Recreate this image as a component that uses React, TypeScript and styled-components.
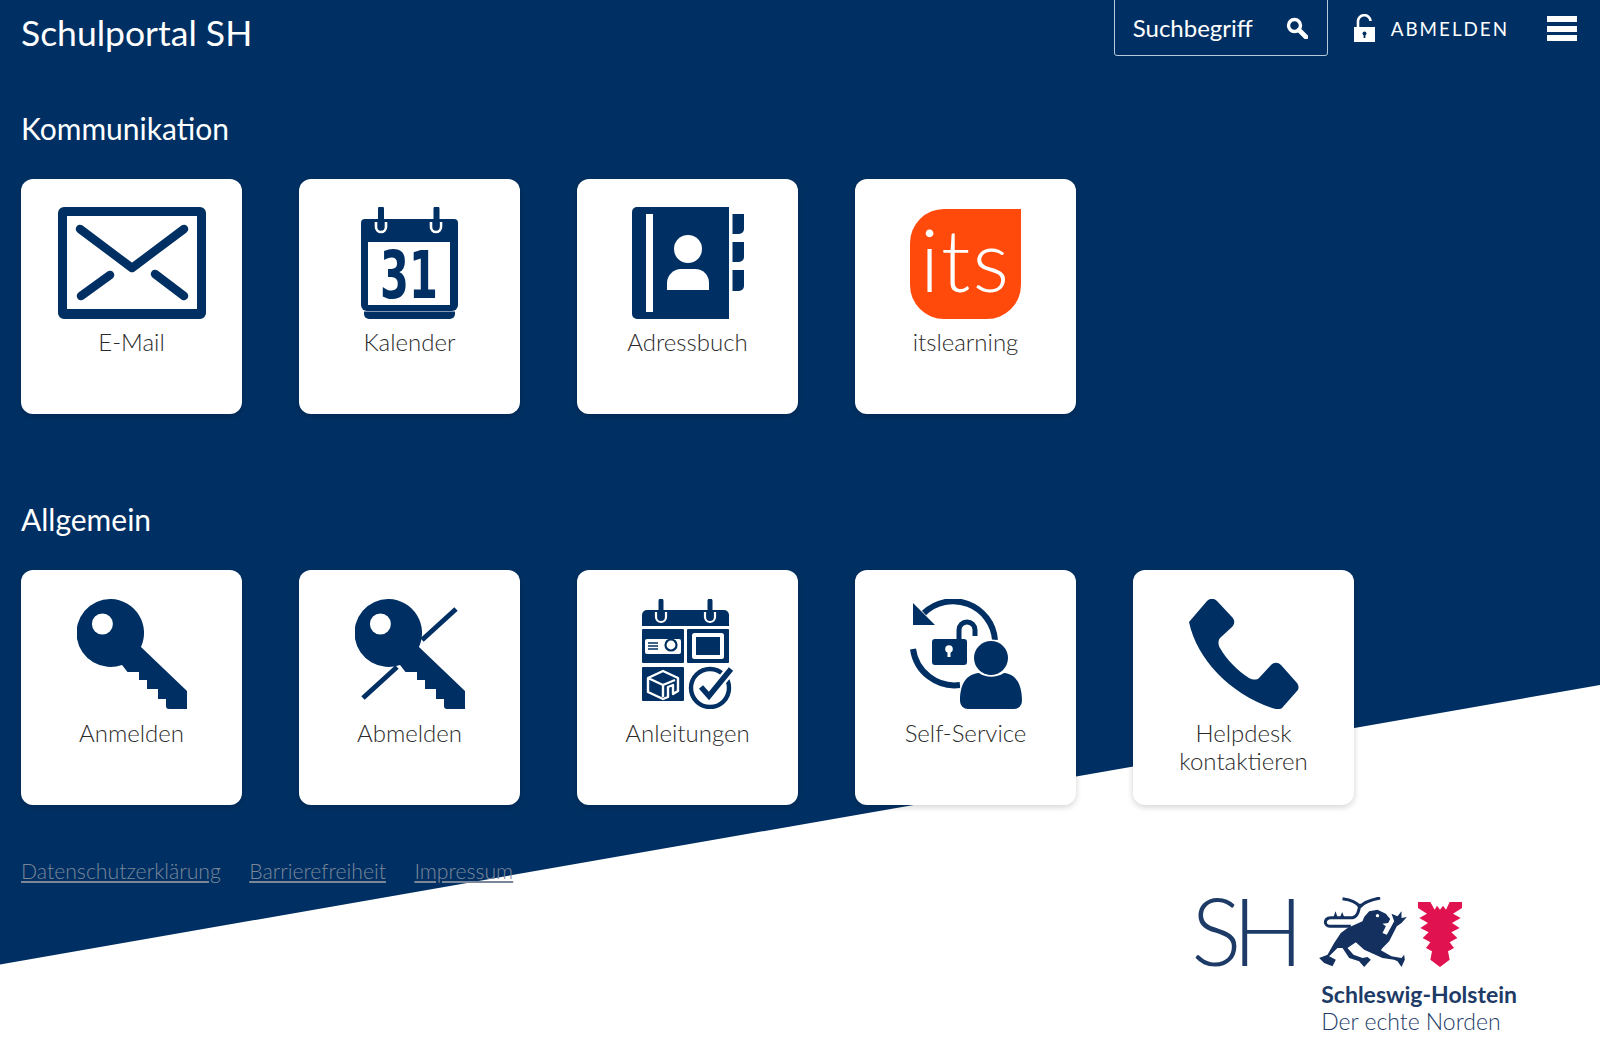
import React from 'react';
import styled, { createGlobalStyle } from 'styled-components';

const NAVY = '#003063';

const GlobalStyle = createGlobalStyle`
  html, body {
    margin: 0;
    padding: 0;
    background: #fff;
    font-family: 'Lato', 'Open Sans', sans-serif;
  }
`;

const Page = styled.div`
  position: relative;
  width: 1600px;
  height: 1045px;
  overflow: hidden;
  background: #fff;
`;

const Backdrop = styled.div`
  position: absolute;
  inset: 0;
  background: ${NAVY};
  clip-path: polygon(0 0, 100% 0, 100% 685px, 0 964.5px);
`;

const Content = styled.div`
  position: relative;
  display: flex;
  flex-direction: column;
  padding: 0 21px;
`;

const Header = styled.header`
  display: flex;
  align-items: flex-start;
  height: 56px;
`;

const Brand = styled.div`
  flex: 1;
  margin-top: 12px;
  color: #fff;
  font-size: 35.5px;
  line-height: 42px;
  font-weight: 400;
`;

const SearchBox = styled.div`
  display: flex;
  align-items: center;
  justify-content: space-between;
  box-sizing: border-box;
  width: 214px;
  height: 57px;
  margin-top: -1px;
  padding: 0 19px 0 18px;
  border: 1px solid #b9c9dc;
  border-radius: 0 0 3px 3px;
  color: #fff;
  font-size: 24px;
`;

const LogoutLink = styled.div`
  display: flex;
  align-items: center;
  gap: 16px;
  margin-left: 26px;
  height: 56px;
  color: #fff;
  font-size: 18.8px;
  letter-spacing: 2px;
`;

const MenuButton = styled.div`
  display: flex;
  flex-direction: column;
  gap: 3.5px;
  width: 30px;
  margin: 16px 2px 0 38px;
`;

const MenuBar = styled.span`
  display: block;
  height: 6px;
  background: #fff;
`;

const Section = styled.section<{ $top: number }>`
  margin-top: ${(p) => p.$top}px;
`;

const SectionTitle = styled.h2`
  margin: 0 0 31px;
  color: #fff;
  font-size: 30px;
  line-height: 40px;
  font-weight: 400;
`;

const Tiles = styled.div`
  display: flex;
  gap: 57px;
`;

const Tile = styled.a`
  display: flex;
  flex-direction: column;
  align-items: center;
  box-sizing: border-box;
  width: 221px;
  height: 235px;
  padding-top: 28px;
  border-radius: 12px;
  background: #fff;
  box-shadow: 0 2px 6px rgba(0, 0, 0, 0.18);
`;

const IconSlot = styled.div`
  display: flex;
  align-items: center;
  justify-content: center;
  height: 112px;
`;

const TileLabel = styled.span`
  margin-top: 9px;
  color: #2b2b2b;
  font-size: 24px;
  line-height: 27.5px;
  font-weight: 300;
  text-align: center;
`;

const Icon = styled.svg`
  display: block;
  fill: ${NAVY};
`;

const ItsLogo = styled.div`
  display: flex;
  align-items: center;
  justify-content: center;
  box-sizing: border-box;
  width: 111px;
  height: 110px;
  margin-top: 2px;
  padding-bottom: 11px;
  border-radius: 34px 0 34px 34px;
  background: #ff4a0c;
  color: #fff;
  font-size: 86px;
  line-height: 1;
  font-weight: 300;
  letter-spacing: 2px;
`;

const Footer = styled.footer`
  display: flex;
  flex-direction: column;
  margin-top: 52px;
`;

const FooterLinks = styled.nav`
  display: flex;
  gap: 28.5px;
`;

const FooterLink = styled.a`
  color: #7b8798;
  font-size: 21.2px;
  line-height: 28px;
  font-weight: 300;
  text-decoration: underline;
`;

const StateLogo = styled.div`
  display: grid;
  grid-template-columns: 130px auto;
  align-self: flex-end;
  margin: 9.5px 62px 0 0;
  color: #1d3b66;
`;

const StateInitials = styled.div`
  margin-top: -2px;
  font-size: 94px;
  line-height: 74px;
  font-weight: 300;
  letter-spacing: -9px;
`;

const StateMarks = styled.div`
  display: flex;
  align-items: flex-end;
  gap: 11px;
  margin-left: -2px;
  padding-top: 2px;
`;

const StateName = styled.div`
  grid-column: 2;
  margin-top: 14px;
  font-size: 23px;
  line-height: 27px;
  font-weight: 700;
  white-space: nowrap;
`;

const StateClaim = styled.div`
  grid-column: 2;
  font-size: 23px;
  line-height: 26px;
  font-weight: 300;
  white-space: nowrap;
`;

const SearchIcon = () => (
  <svg width="22" height="22" viewBox="0 0 22 22" fill="none" stroke="#fff">
    <circle cx="8.5" cy="8.5" r="6" strokeWidth="3.4" />
    <path d="M13 13l7 7" strokeWidth="4.6" strokeLinecap="round" />
  </svg>
);

const LockIcon = () => (
  <svg width="21" height="28" viewBox="0 0 21 28">
    <path d="M4 14V8a6.3 6.3 0 0 1 12.6-1" fill="none" stroke="#fff" strokeWidth="2.6" />
    <rect x="0" y="13" width="21" height="15" fill="#fff" />
    <circle cx="10.5" cy="19.5" r="2" fill={NAVY} />
    <rect x="9.6" y="20" width="1.8" height="4" fill={NAVY} />
  </svg>
);

const MailIcon = () => (
  <Icon width="148" height="112" viewBox="0 0 148 112">
    <path
      fillRule="evenodd"
      d="M6 0h136a6 6 0 0 1 6 6v100a6 6 0 0 1-6 6H6a6 6 0 0 1-6-6V6a6 6 0 0 1 6-6zM9 9v93h130V9z"
    />
    <path
      d="M22 22l52 39 52-39M23 89l29-21M97 67l29 22"
      fill="none"
      stroke={NAVY}
      strokeWidth="8.5"
      strokeLinecap="round"
      strokeLinejoin="round"
    />
  </Icon>
);

const CalendarIcon = () => (
  <Icon width="97" height="112" viewBox="0 0 97 112">
    <path d="M4 12h89a4 4 0 0 1 4 4v82a6 6 0 0 1-6 6H6a6 6 0 0 1-6-6V16a4 4 0 0 1 4-4z" />
    <path d="M3 104.500h91V107a5 5 0 0 1-5 5H8a5 5 0 0 1-5-5z" />
    <rect x="7" y="35" width="82" height="63" fill="#fff" />
    <path d="M15 15v5a5 5 0 0 0 10 0v-5M70 15v5a5 5 0 0 0 10 0v-5" fill="none" stroke="#fff" strokeWidth="2.6" />
    <path d="M20 2v17M75.500 2v17" stroke={NAVY} strokeWidth="6" strokeLinecap="round" />
    <g transform="translate(48 91) scale(0.63 1)">
      <text textAnchor="middle" fontFamily="'DejaVu Sans', sans-serif" fontWeight="700" fontSize="66">
        31
      </text>
    </g>
  </Icon>
);

const BookIcon = () => (
  <Icon width="112" height="112" viewBox="0 0 112 112">
    <path d="M5 0h92v112H5a5 5 0 0 1-5-5V5a5 5 0 0 1 5-5z" />
    <rect x="14" y="7" width="7" height="98" fill="#fff" />
    <circle cx="56" cy="42" r="14" fill="#fff" />
    <path d="M35 83V76c0-8 7-14 14-14h14c8 0 14 6 14 14v7z" fill="#fff" />
    <path d="M100.500 7H112v15a5 5 0 0 1-5 5h-6.500zM100.500 35H112v15a5 5 0 0 1-5 5h-6.500zM100.500 63H112v16a5 5 0 0 1-5 5h-6.500z" />
  </Icon>
);

const KEY_PATH =
  'M34 0a34 34 0 0 1 30 48l46 44v18H92a3 3 0 0 1-3-3v-7h-8V90H70v-9h-8v-8H50.500L45 66a34 34 0 1 1-11-66zM25.400 14.500a10.500 10.500 0 1 0 0 21 10.500 10.500 0 0 0 0-21z';

const KeyIcon = () => (
  <Icon width="110" height="111" viewBox="0 0 110 111">
    <path fillRule="evenodd" d={KEY_PATH} />
  </Icon>
);

const StruckKeyIcon = () => (
  <Icon width="110" height="111" viewBox="0 0 110 111">
    <path d="M67 41l34-31M8 99l34-31" stroke={NAVY} strokeWidth="5" fill="none" />
    <path fillRule="evenodd" d={KEY_PATH} />
  </Icon>
);

const GuideIcon = () => (
  <Icon width="92" height="110" viewBox="0 0 92 110">
    <path d="M5 11h77a5 5 0 0 1 5 5v11H0V16a5 5 0 0 1 5-5z" />
    <path d="M14 13v5a5 5 0 0 0 10 0v-5M63 13v5a5 5 0 0 0 10 0v-5" fill="none" stroke="#fff" strokeWidth="2.200" />
    <path d="M19 2v15M68 2v15" stroke={NAVY} strokeWidth="5" strokeLinecap="round" />
    <rect x="0" y="30" width="42" height="34" rx="1" />
    <rect x="45" y="30" width="42" height="34" rx="1" />
    <rect x="0" y="68" width="42" height="34" rx="1" />
    <rect x="3" y="40" width="36" height="15" rx="2" fill="#fff" />
    <path d="M6 44h10M6 47h10M6 50h10" stroke={NAVY} strokeWidth="1.500" />
    <circle cx="29" cy="46" r="5.500" fill="#fff" stroke={NAVY} strokeWidth="2.200" />
    <rect x="50" y="34" width="32" height="26" rx="2.500" fill="#fff" />
    <rect x="54" y="38" width="24" height="18" />
    <path
      d="M6 79l15-7 15 7v13l-5 3v-9l-5 2v10l-5 2-15-7zM6 79l15 7 12-5M21 86v12"
      fill="none"
      stroke="#fff"
      strokeWidth="2.400"
      strokeLinejoin="round"
    />
    <circle cx="68" cy="89" r="19" fill="#fff" stroke={NAVY} strokeWidth="4.400" />
    <path d="M59 88l8 9 23-28" fill="none" stroke="#fff" strokeWidth="10" />
    <path d="M59 88l8 9 22-27" fill="none" stroke={NAVY} strokeWidth="5.500" />
  </Icon>
);

const SelfServiceIcon = () => (
  <Icon width="112" height="110" viewBox="0 0 112 110">
    <path d="M14 14A42 42 0 0 1 85 41M3 50a42 42 0 0 0 47 36" fill="none" stroke={NAVY} strokeWidth="6" />
    <path d="M3 4v22h22z" />
    <rect x="22" y="40" width="35" height="26" rx="3" />
    <path d="M49 40V31a8 8 0 0 1 16 0v6" fill="none" stroke={NAVY} strokeWidth="5" />
    <circle cx="39" cy="50" r="3.800" fill="#fff" />
    <rect x="37.500" y="51" width="3" height="7" fill="#fff" />
    <circle cx="81" cy="59" r="17" stroke="#fff" strokeWidth="3" paintOrder="stroke" />
    <path d="M50 102c0-15 5-27 19-28 7 5 17 5 25 0 13 1 18 13 18 28a8 8 0 0 1-8 8H58a8 8 0 0 1-8-8z" stroke="#fff" strokeWidth="3" paintOrder="stroke" />
  </Icon>
);

const PhoneIcon = () => (
  <Icon width="110" height="110" viewBox="0 0 110 110">
    <path d="M0 23L18 2c3-3 7-3 10 0l15 16c3 3 3 7 0 10L31 39c-2 2-2 7 0 10 7 12 17 22 29 30 4 2 8 2 10 0l12-13c3-3 7-3 10 0l16 18c2 3 2 6 0 8L93 109c-3 2-7 1-10 0C40 94 8 60 0 23z" />
  </Icon>
);

const StateLion = () => (
  <svg width="88" height="70" viewBox="15 12 263 210" fill="#14305f">
    <path d="M110 100H50C28 100 28 76 50 74H115C130 72 135 55 137 32M137 42C128 26 110 20 85 17M137 42C150 26 170 20 198 15" fill="none" stroke="#14305f" strokeWidth="9" />
    <path d="M58 72l6-17 6 17zM78 72l6-15 6 15z" />
    <path d="M145 85L150 72 165 55 190 50 215 62 228 78 222 90 205 92 215 100 205 120 218 125 240 85 232 62 250 70 262 55 262 75 278 72 262 90 248 100 225 145 205 165 200 172 232 190 262 195 270 185 272 200 262 222 250 205 240 200 205 195 150 170 125 148 100 165 118 185 145 195 160 192 170 200 150 222 135 205 105 195 85 165 70 165 45 190 65 200 55 220 30 210 15 195 40 185 60 150 80 120 100 105z" />
    <circle cx="190" cy="68" r="5" fill="#fff" />
  </svg>
);

const StateShield = () => (
  <svg width="44" height="65" viewBox="308 27 132 195" fill="#e0124f">
    <path d="M308 27H345L358 50 365 38 374 50 383 38 392 50 403 27H440V45L413 62 436 75 410 90 433 105 408 118 426 135 403 148 416 165 398 175 403 200 374 222 345 200 350 175 332 165 345 148 322 135 340 118 315 105 338 90 312 75 335 62 308 45z" />
  </svg>
);

type TileData = { label: React.ReactNode; icon: React.ReactNode };

const communication: TileData[] = [
  { label: 'E-Mail', icon: <MailIcon /> },
  { label: 'Kalender', icon: <CalendarIcon /> },
  { label: 'Adressbuch', icon: <BookIcon /> },
  { label: 'itslearning', icon: <ItsLogo>its</ItsLogo> },
];

const general: TileData[] = [
  { label: 'Anmelden', icon: <KeyIcon /> },
  { label: 'Abmelden', icon: <StruckKeyIcon /> },
  { label: 'Anleitungen', icon: <GuideIcon /> },
  { label: 'Self-Service', icon: <SelfServiceIcon /> },
  { label: <>Helpdesk<br />kontaktieren</>, icon: <PhoneIcon /> },
];

const TileRow = ({ items }: { items: TileData[] }) => (
  <Tiles>
    {items.map((item, i) => (
      <Tile key={i}>
        <IconSlot>{item.icon}</IconSlot>
        <TileLabel>{item.label}</TileLabel>
      </Tile>
    ))}
  </Tiles>
);

export default function App() {
  return (
    <Page>
      <GlobalStyle />
      <Backdrop />
      <Content>
        <Header>
          <Brand>Schulportal SH</Brand>
          <SearchBox>
            Suchbegriff
            <SearchIcon />
          </SearchBox>
          <LogoutLink>
            <LockIcon />
            ABMELDEN
          </LogoutLink>
          <MenuButton>
            <MenuBar />
            <MenuBar />
            <MenuBar />
          </MenuButton>
        </Header>
        <Section $top={52}>
          <SectionTitle>Kommunikation</SectionTitle>
          <TileRow items={communication} />
        </Section>
        <Section $top={85}>
          <SectionTitle>Allgemein</SectionTitle>
          <TileRow items={general} />
        </Section>
        <Footer>
          <FooterLinks>
            <FooterLink>Datenschutzerklärung</FooterLink>
            <FooterLink>Barrierefreiheit</FooterLink>
            <FooterLink>Impressum</FooterLink>
          </FooterLinks>
          <StateLogo>
            <StateInitials>SH</StateInitials>
            <StateMarks>
              <StateLion />
              <StateShield />
            </StateMarks>
            <StateName>Schleswig-Holstein</StateName>
            <StateClaim>Der echte Norden</StateClaim>
          </StateLogo>
        </Footer>
      </Content>
    </Page>
  );
}
